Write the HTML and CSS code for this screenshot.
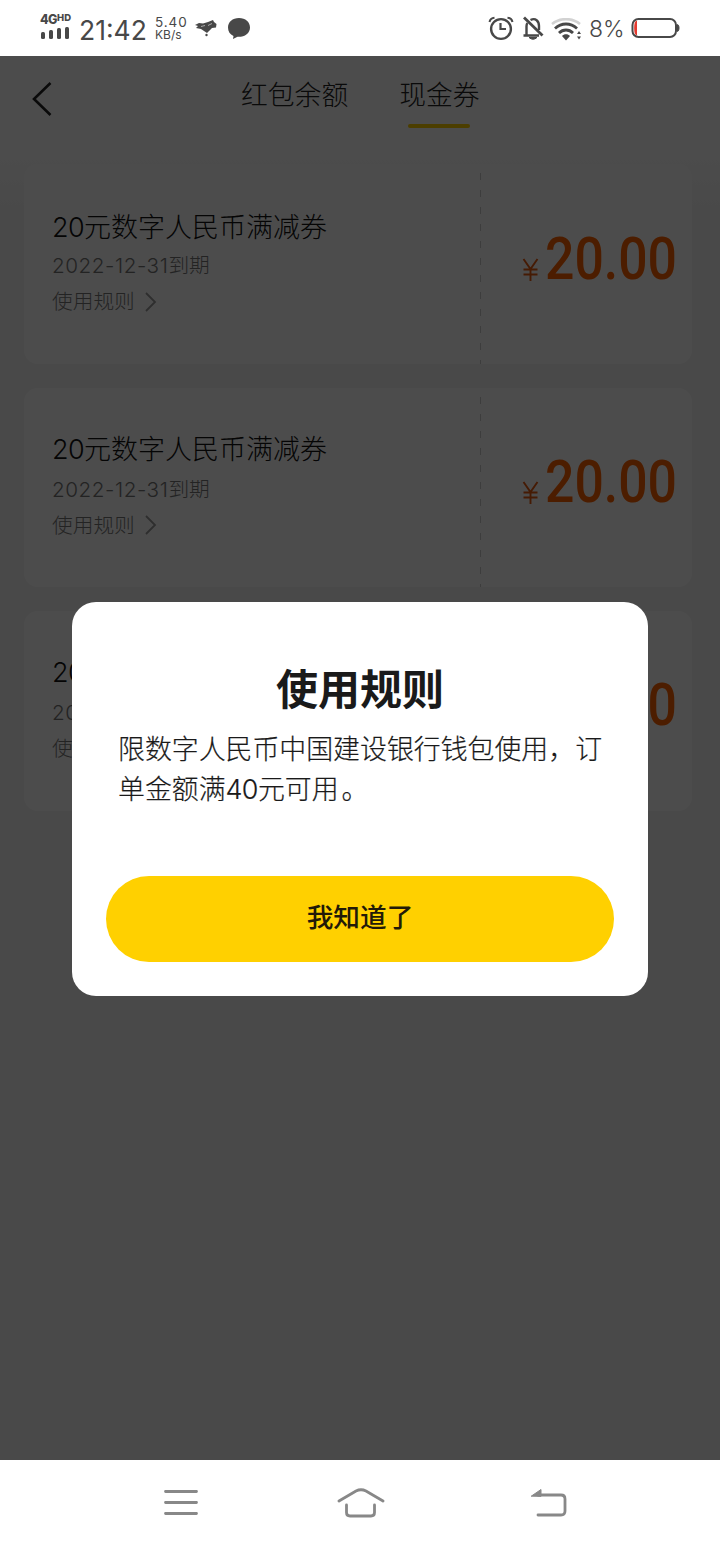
FILE: index.html
```html
<!DOCTYPE html>
<html lang="zh-CN">
<head>
<meta charset="utf-8">
<title>现金券</title>
<link rel="stylesheet" href="styles.css">
</head>
<body>
<div class="screen">
  <header class="status">
    <div class="signal">
      <span class="net">4G<small>HD</small></span>
      <svg width="30" height="12" viewBox="0 0 30 12" fill="#484848"><rect x="1" y="5" width="4" height="7" rx="1.5"/><rect x="9" y="3" width="4" height="9" rx="1.5"/><rect x="17" y="1" width="4" height="11" rx="1.5"/><rect x="25" y="0" width="4" height="12" rx="1.5"/></svg>
    </div>
    <span class="time">21:42</span>
    <div class="speed"><span class="rate">5.40</span><span class="unit">KB/s</span></div>
    <svg class="bird" width="22" height="18" viewBox="0 0 22 18"><path fill="#484848" d="M0 6L4 4 8 4.500 13 3 18 1 19 3 21.500 5 21 8.500 17 9 14 12 12 14 9 12 6 10 1 9 3 7Z"/><circle cx="11.500" cy="16" r="1.200" fill="#484848"/><path d="M6 7.500l4-1M13 6.500l4-2" stroke="#aaa" fill="none"/></svg>
    <svg class="bubble" width="24" height="24" viewBox="0 0 24 24"><path fill="#484848" d="M12 1C5.500 1 1 5 1 10.500c0 4 2 7 5.500 8.500L6 22l4.500-2.200C17.500 20.200 23 16.500 23 10.500 23 5 18.500 1 12 1Z"/></svg>
    <div class="status-right">
      <svg width="26" height="26" viewBox="0 0 26 26" fill="none" stroke="#484848"><circle cx="13" cy="14" r="9.900" stroke-width="2.400"/><path d="M12.500 8v6h5.500" stroke-width="2.200"/><path d="M1.500 7C2 4.500 4 3 6.500 2.800M24.500 7C24 4.500 22 3 19.500 2.800" stroke-width="2"/></svg>
      <svg class="bell" width="22" height="26" viewBox="0 0 22 26" fill="none" stroke="#484848"><path d="M1.500 20.500h15.500M4.500 20.500v-9q0-2 .8-3.500M8.500 5c5-2.500 8.500 1 8.500 6v4" stroke-width="2.400"/><path d="M2 2.500l18.500 18" stroke-width="2.800"/><path d="M7 22.500q4 3.500 8 0Z" fill="#484848" stroke-width="1"/></svg>
      <svg class="wifi" width="32" height="24" viewBox="0 0 32 24" fill="none"><path d="M1 6C9-.5 21-.5 29 6" stroke="#d2d2d2" stroke-width="2.600"/><path d="M4 10.500c6.500-6 15.500-6 22 0M8 15c4-4 10-4 14 0" stroke="#484848" stroke-width="2.800"/><path d="M11 18c2-2.500 6-2.500 8 0l-4 4.500ZM26 16l2-3 2 3ZM26 18.500h4l-2 3Z" fill="#484848"/></svg>
      <span class="percent">8%</span>
      <svg class="battery" width="50" height="22" viewBox="0 0 50 22"><path d="M6 3.500C4 4 3.200 6 3.200 11s.8 7 2.800 7.500Z" fill="#e53b30"/><rect x="1.500" y="2" width="43.500" height="18" rx="6" fill="none" stroke="#484848" stroke-width="2"/><path d="M46.500 7.500c2 .5 2 6.500 0 7Z" fill="#484848" stroke="#484848"/></svg>
    </div>
  </header>

  <main class="page">
    <nav class="tabs">
      <svg class="back" width="22" height="36" viewBox="0 0 22 36"><path d="M19.500 2L3 18l16.500 16" fill="none" stroke="#222" stroke-width="2.600"/></svg>
      <span class="tab">红包余额</span>
      <span class="tab active">现金券</span>
    </nav>
    <section class="list">
      <article class="card">
        <div class="info"><h2><span class="num">20</span>元数字人民币满减券</h2><p class="date"><span class="num">2022-12-31</span>到期</p><p class="rule">使用规则<svg width="12" height="20" viewBox="0 0 12 20"><path d="M1 1l9 9-9 9" fill="none" stroke="#999" stroke-width="1.800"/></svg></p></div>
        <div class="price"><svg width="160" height="56" viewBox="0 0 160 56"><path class="yen" d="M3.500 27l7 10 7-10M10.500 37v12M3.500 37.500h14M3.500 42.500h14"/><text x="25" y="47" textLength="132" lengthAdjust="spacingAndGlyphs">20.00</text></svg></div>
      </article>
      <article class="card">
        <div class="info"><h2><span class="num">20</span>元数字人民币满减券</h2><p class="date"><span class="num">2022-12-31</span>到期</p><p class="rule">使用规则<svg width="12" height="20" viewBox="0 0 12 20"><path d="M1 1l9 9-9 9" fill="none" stroke="#999" stroke-width="1.800"/></svg></p></div>
        <div class="price"><svg width="160" height="56" viewBox="0 0 160 56"><path class="yen" d="M3.500 27l7 10 7-10M10.500 37v12M3.500 37.500h14M3.500 42.500h14"/><text x="25" y="47" textLength="132" lengthAdjust="spacingAndGlyphs">20.00</text></svg></div>
      </article>
      <article class="card">
        <div class="info"><h2><span class="num">20</span>元数字人民币满减券</h2><p class="date"><span class="num">2022-12-31</span>到期</p><p class="rule">使用规则<svg width="12" height="20" viewBox="0 0 12 20"><path d="M1 1l9 9-9 9" fill="none" stroke="#999" stroke-width="1.800"/></svg></p></div>
        <div class="price"><svg width="160" height="56" viewBox="0 0 160 56"><path class="yen" d="M3.500 27l7 10 7-10M10.500 37v12M3.500 37.500h14M3.500 42.500h14"/><text x="25" y="47" textLength="132" lengthAdjust="spacingAndGlyphs">20.00</text></svg></div>
      </article>
    </section>
    <div class="mask">
      <div class="dialog">
        <h1>使用规则</h1>
        <p class="message">限数字人民币中国建设银行钱包使用，订<br>单金额满<span class="num">40</span>元可用<span class="stop">。</span></p>
        <button class="confirm">我知道了</button>
      </div>
    </div>
  </main>

  <footer class="navbar">
    <svg width="34" height="28" viewBox="0 0 34 28"><path d="M1.500 2.500h31M1.500 13.500h31M1.500 24.500h31"/></svg>
    <svg width="50" height="32" viewBox="0 0 50 32"><path d="M3 14L20 4q5-2.500 10 0L47 14M10.500 18v7.500q0 3.500 3.500 3.500h21q3.500 0 3.500-3.500v-7.500"/></svg>
    <svg width="38" height="30" viewBox="0 0 38 30"><path d="M8 7h23q4 0 4 4v12q0 4-4 4H8"/><path class="solid" d="M1.500 8L11 1.500V8Z"/></svg>
  </footer>
</div>
</body>
</html>
```
FILE: styles.css
```css
* { box-sizing: border-box; margin: 0; padding: 0; }
body { font-family: "Noto Sans CJK SC", sans-serif; font-weight: 300; background: #fff; }
svg { display: block; flex: none; }
.screen { width: 720px; height: 1544px; display: flex; flex-direction: column; overflow: hidden; }

.status { height: 56px; flex: none; display: flex; align-items: center; padding: 0 39px 0 40px; color: #484848; font-family: Inter, sans-serif; }
.signal { width: 40px; height: 26px; display: flex; flex-direction: column; justify-content: space-between; margin-top: -4px; }
.net { font: 800 12.5px/14px Inter, sans-serif; display: flex; letter-spacing: -.5px; white-space: nowrap; }
.net small { font-size: 9.5px; line-height: 9px; letter-spacing: 0; }
.time { width: 75px; font-size: 26.5px; font-weight: 400; line-height: 30px; padding-top: 3px; margin-left: -1px; margin-right: 1px; white-space: nowrap; }
.speed { width: 40px; display: flex; flex-direction: column; font-weight: 400; }
.rate { font-size: 13.5px; line-height: 14px; letter-spacing: .9px; }
.unit { font-size: 12px; line-height: 12px; }
.bubble { margin-left: 10px; margin-top: 1px; }
.status-right { margin-left: auto; display: flex; align-items: center; }
.bell { margin-left: 8px; }
.wifi { margin-left: 7px; margin-top: 3px; }
.percent { width: 48px; padding: 2px 0 0 6px; font-size: 23px; font-weight: 350; line-height: 28px; white-space: nowrap; }

.page { flex: 1; position: relative; background: linear-gradient(#fff 0, #fff 90px, #f6f6f6 150px); }
.tabs { height: 108px; display: flex; align-items: flex-start; padding: 19px 0 0 31px; font-size: 26.8px; line-height: 38px; color: #222; }
.back { margin: 6px 189px 0 0; }
.back + .tab { margin-left: -1px; }
.tab { margin-right: 51px; }
.tab.active { display: flex; flex-direction: column; align-items: center; }
.tab.active::after { content: ""; width: 62px; height: 4px; margin-top: 11px; border-radius: 2px; background: #ffd000; }
.list { display: flex; flex-direction: column; gap: 24px; padding: 0 28px 0 24px; }
.card { height: 199.500px; display: flex; background: #fff; border-radius: 14px; }
.info { width: 456px; padding: 43px 0 0 28px; }
.info h2 { font-size: 27px; font-weight: 300; line-height: 38px; color: #111; }
.card + .card .info { padding-top: 41px; }
.card + .card .date { padding-top: 2px; }
.date { font-size: 20.7px; line-height: 35px; color: #777; }
.date .num { letter-spacing: .55px; }
.rule { display: flex; align-items: center; font-size: 20.7px; line-height: 35px; color: #777; }
.rule svg { margin-left: 10px; margin-top: 2px; }
.num { font-family: Inter, sans-serif; letter-spacing: -.6px; }
.price { flex: 1; padding: 68px 0 0 40px; background: repeating-linear-gradient(#ccc 0 7px, transparent 7px 17px) 0 9px / 1px 100% no-repeat; }
.card + .card .price { padding-top: 67px; }
.yen { fill: none; stroke: #e85a10; stroke-width: 1.9; }
.price text { font: 500 59px Roboto, sans-serif; fill: #ff6200; }

.mask { position: absolute; inset: 0; padding-top: 546px; background: rgba(0, 0, 0, .7); }
.dialog { width: 576px; height: 394px; margin: 0 auto; padding: 54px 34px 34px; background: #fff; border-radius: 24px; color: #1a1a1a; display: flex; flex-direction: column; }
.dialog h1 { font-size: 42px; font-weight: 700; line-height: 62px; text-align: center; }
.message { padding: 10px 0 0 12px; font-size: 26.9px; line-height: 40px; white-space: nowrap; -webkit-text-stroke: .2px #1a1a1a; }
.stop { margin-left: 3px; }
.confirm { margin-top: auto; height: 86px; padding-bottom: 8px; border: 0; border-radius: 43px; background: #ffd000; color: #221a08; font: 500 26.7px "Noto Sans CJK SC", sans-serif; }

.navbar { height: 84px; flex: none; display: flex; align-items: center; justify-content: space-between; padding: 2px 152px 0 163.5px; background: #fff; }
.navbar svg:nth-child(2) { margin-right: 6px; }
.navbar path { fill: none; stroke: #888; stroke-width: 2.800; stroke-linecap: round; }
.navbar .solid { fill: #888; stroke-width: 1; }
```
